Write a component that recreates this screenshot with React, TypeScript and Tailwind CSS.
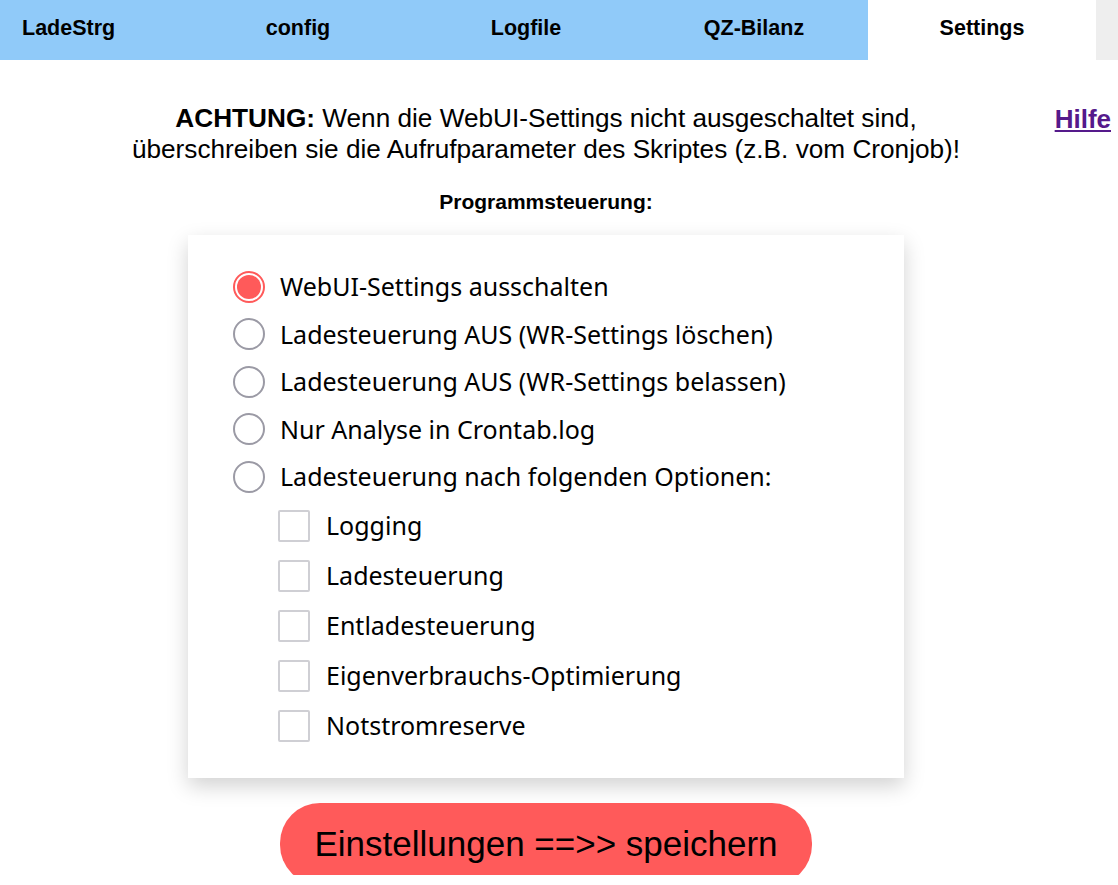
const tabs = ["config", "Logfile", "QZ-Bilanz"];

const radios = [
  "WebUI-Settings ausschalten",
  "Ladesteuerung AUS (WR-Settings löschen)",
  "Ladesteuerung AUS (WR-Settings belassen)",
  "Nur Analyse in Crontab.log",
  "Ladesteuerung nach folgenden Optionen:",
];

const checks = ["Logging", "Ladesteuerung", "Entladesteuerung", "Eigenverbrauchs-Optimierung", "Notstromreserve"];

export default function App() {
  return (
    <div className="min-h-[885px] bg-white font-['Liberation_Sans',Arial,sans-serif] text-black">
      <div className="flex h-[60px] bg-[#eeeeee] text-[21.5px] font-bold">
        <div className="flex h-full w-[184px] items-center bg-[#90caf9] pb-[3px] pl-[22px]">LadeStrg</div>
        {tabs.map((t) => (
          <div key={t} className="flex h-full w-[228px] items-center justify-center bg-[#90caf9] pb-[3px]">
            {t}
          </div>
        ))}
        <div className="flex h-full w-[228px] items-center justify-center bg-white pb-[3px]">Settings</div>
      </div>

      <div className="relative w-[1092px] pt-[43px]">
        <a href="#" className="absolute right-[-19px] top-[43px] text-[26px] font-bold leading-[32px] text-[#551a8b] underline">
          Hilfe
        </a>
        <p className="text-center text-[26.2px] leading-[31px]">
          <b>ACHTUNG:</b> Wenn die WebUI-Settings nicht ausgeschaltet sind,
          <br />
          überschreiben sie die Aufrufparameter des Skriptes (z.B. vom Cronjob)!
        </p>
        <p className="mt-[25px] text-center text-[21px] font-bold leading-[24px]">Programmsteuerung:</p>

        <div className="mx-auto mt-[21px] w-[716px] bg-white pb-[27px] pl-[45px] pt-[28px] shadow-[0_8px_20px_rgba(0,0,0,0.18)] font-['Noto_Sans',sans-serif] text-[25px]">
          {radios.map((r, i) => (
            <label key={r} className="flex h-[47.5px] items-center gap-[15px]">
              {i === 0 ? (
                <span className="flex h-[32px] w-[32px] items-center justify-center rounded-full border-2 border-[#ff5a5a] bg-white">
                  <span className="h-[24px] w-[24px] rounded-full bg-[#ff5a5a]" />
                </span>
              ) : (
                <span className="h-[32px] w-[32px] rounded-full border-2 border-[#9b9aa5] bg-white" />
              )}
              <span>{r}</span>
            </label>
          ))}
          <div className="pl-[45px]">
            {checks.map((c) => (
              <label key={c} className="flex h-[50px] items-center gap-[16px]">
                <span className="h-[32px] w-[32px] rounded-[2px] border-2 border-[#cfcfd4] bg-white" />
                <span>{c}</span>
              </label>
            ))}
          </div>
        </div>

        <div className="mt-[25px] flex h-[72px] justify-center overflow-hidden">
          <button className="h-[82px] w-[532px] shrink-0 rounded-[40px] bg-[#ff5a5a] text-[35px] leading-[40px] text-black">
            Einstellungen ==&gt;&gt; speichern
          </button>
        </div>
      </div>
    </div>
  );
}
